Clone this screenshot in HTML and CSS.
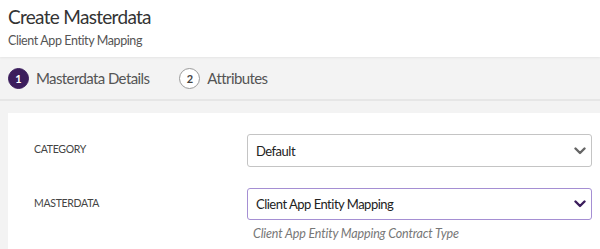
FILE: index.html
```html
<!DOCTYPE html>
<html lang="en">
<head>
<meta charset="utf-8">
<title>Create Masterdata</title>
<link rel="stylesheet" href="styles.css">
</head>
<body>
<header class="page-header">
  <h1 class="title">Create Masterdata</h1>
  <div class="subtitle">Client App Entity Mapping</div>
</header>
<nav class="steps">
  <div class="step step-active">
    <span class="step-num">1</span>
    <span class="step-label">Masterdata Details</span>
  </div>
  <div class="step">
    <span class="step-num">2</span>
    <span class="step-label">Attributes</span>
  </div>
</nav>
<main class="card">
  <div class="form-row">
    <label class="field-label">CATEGORY</label>
    <div class="field">
      <div class="select">
        <span class="select-value">Default</span>
        <svg class="chevron" width="12" height="8" viewBox="0 0 12 8"><path d="M1.5 1.5 L6 6 L10.5 1.5" fill="none" stroke="currentColor" stroke-width="2.4" stroke-linecap="round" stroke-linejoin="round"/></svg>
      </div>
    </div>
  </div>
  <div class="form-row">
    <label class="field-label">MASTERDATA</label>
    <div class="field">
      <div class="select select-focus">
        <span class="select-value">Client App Entity Mapping</span>
        <svg class="chevron" width="12" height="8" viewBox="0 0 12 8"><path d="M1.5 1.5 L6 6 L10.5 1.5" fill="none" stroke="currentColor" stroke-width="2.4" stroke-linecap="round" stroke-linejoin="round"/></svg>
      </div>
      <div class="help">Client App Entity Mapping Contract Type</div>
    </div>
  </div>
</main>
</body>
</html>
```
FILE: styles.css
```css
* { box-sizing: border-box; }
html, body { margin: 0; padding: 0; }
body {
  background: #f3f3f3;
  font-family: "Lato", "Noto Sans", sans-serif;
  color: #333;
  width: 600px;
  height: 249px;
  overflow: hidden;
  display: flex;
  flex-direction: column;
}
.page-header {
  flex: none;
  background: #fff;
  height: 57px;
  padding: 5px 8px 0;
  box-shadow: 0 1px 2px rgba(0,0,0,0.06);
  position: relative;
}
.title {
  margin: 0;
  font-size: 19px;
  font-weight: 400;
  letter-spacing: -0.7px;
  line-height: 24px;
  color: #333;
}
.subtitle {
  margin-top: 4px;
  font-size: 12.5px;
  letter-spacing: -0.4px;
  line-height: 16px;
  color: #555;
}
.steps {
  flex: none;
  display: flex;
  align-items: center;
  gap: 30px;
  height: 44px;
  padding: 0 8px;
  border-bottom: 2px solid #e6e6e6;
}
.step {
  display: flex;
  align-items: center;
  gap: 7px;
}
.step-num {
  width: 21px;
  height: 21px;
  border-radius: 50%;
  display: flex;
  align-items: center;
  justify-content: center;
  font-size: 11px;
  font-weight: 700;
  background: #fff;
  border: 1px solid #9a9a9a;
  color: #444;
}
.step-active .step-num {
  background: #3b1d5c;
  border-color: #3b1d5c;
  color: #fff;
}
.step-label {
  font-size: 15px;
  letter-spacing: -0.6px;
  color: #555;
}
.card {
  flex: 1;
  min-height: 0;
  background: #fff;
  margin: 12px 0 0 8px;
  padding: 21px 8px 0 26px;
}
.form-row {
  display: flex;
  align-items: flex-start;
}
.form-row + .form-row { margin-top: 21px; }
.field-label {
  width: 213px;
  flex: none;
  font-size: 10.5px;
  letter-spacing: -0.3px;
  color: #444;
  line-height: 14px;
  padding-top: 8px;
}
.field { flex: 1; }
.select {
  height: 33px;
  border: 1px solid #c4c4c4;
  border-radius: 3px;
  display: flex;
  align-items: center;
  justify-content: space-between;
  padding: 0 5px 0 8px;
  color: #666;
}
.select-focus {
  height: 32px;
  border-color: #a58fd3;
  color: #3b1d5c;
}
.select-value {
  font-size: 13px;
  letter-spacing: -0.5px;
  color: #222;
}
.chevron { display: block; }
.help {
  margin-top: 6px;
  padding-left: 6px;
  font-size: 12.5px;
  letter-spacing: -0.15px;
  line-height: 16px;
  font-style: italic;
  color: #777;
}
```
